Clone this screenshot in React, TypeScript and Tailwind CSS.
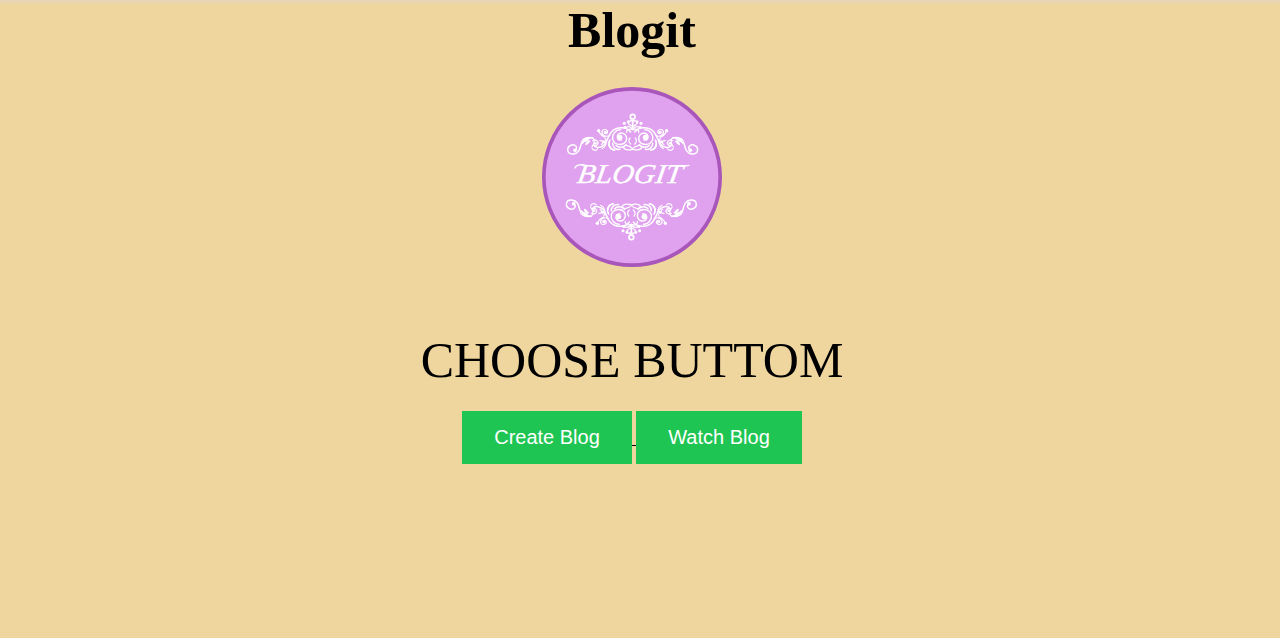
function HalfOrnament() {
  return (
    <g fill="none" stroke="#fff" strokeWidth="4.4" strokeLinecap="round">
      <path d="M117 210C128 204 118 192 107 195C90 200 91 223 112 222C130 220 132 204 136 190C140 176 152 170 170 174" />
      <path d="M139 190C145 182 153 180 160 184" strokeWidth="3.6" />
      <path d="M168 172C178 178 176 192 168 200M170 182C180 176 190 186 184 194C180 200 172 198 172 192" strokeWidth="3.6" />
      <path d="M284 156C272 139 242 139 227 155C212 171 214 198 190 202C182 203 176 200 174 196" />
      <path d="M256 180C243 183 239 166 251 160C267 155 276 172 270 184C261 198 236 197 230 178C227 164 238 150 254 149" strokeWidth="4" />
      <path d="M222 166C206 174 194 162 199 152C205 145 217 150 214 158C212 163 205 162 205 157" strokeWidth="3.6" />
      <path d="M188 152C192 162 198 169 208 171" strokeWidth="3.6" />
      <path d="M207 174C215 186 210 200 198 206M168 204C172 213 181 213 185 207M192 182C202 180 203 190 196 194" strokeWidth="3.6" />
      <path d="M222 180C214 194 222 209 236 211M230 190C230 202 240 210 252 208M240 196C248 205 262 203 270 194" />
      <path d="M289 208C278 212 262 209 263 201C266 193 280 196 289 205M284 192C278 187 277 180 282 174" strokeWidth="3.8" />
      <path d="M288 148C278 145 270 150 272 158M290 147C284 139 278 138 269 142M289 138C282 136 277 132 276 127" strokeWidth="3.8" />
      <g fill="#fff" stroke="none">
        <circle cx="117" cy="211" r="5.5" />
        <circle cx="252" cy="172" r="7.5" />
        <circle cx="188" cy="152" r="5" />
        <circle cx="178" cy="190" r="4" />
        <circle cx="208" cy="157" r="4.5" />
        <circle cx="204" cy="185" r="4.5" />
        <circle cx="265" cy="130" r="4.5" />
        <circle cx="267" cy="142" r="4" />
        <circle cx="277" cy="125" r="4.5" />
        <path d="M140 188C144 174 158 169 168 174C158 177 154 184 140 188Z" />
        <path d="M148 192C150 184 158 181 164 183C158 187 158 194 148 196Z" />
        <path d="M221 178C218 194 224 205 238 212C221 212 210 196 221 178Z" />
      </g>
    </g>
  );
}

function Ornament() {
  return (
    <g>
      <HalfOrnament />
      <g transform="translate(580 0) scale(-1 1)">
        <HalfOrnament />
      </g>
      <g fill="none" stroke="#fff" strokeWidth="5" strokeLinecap="round">
        <circle cx="290" cy="110" r="7" />
        <path d="M290 118V149M283 122H297" />
      </g>
    </g>
  );
}

function Logo() {
  return (
    <svg
      className="mt-[28px] block h-[180px] w-[180px]"
      viewBox="18 21 540 540"
      role="img"
      aria-label="Blogit"
    >
      <circle cx="288" cy="291" r="264.5" fill="#e0a2ee" stroke="#a956bb" strokeWidth="11" />
      <Ornament />
      <g transform="translate(-4 582) scale(1 -1)">
        <Ornament />
      </g>
      <text
        x="0"
        y="0"
        transform="translate(121 310) skewX(-9)"
        fill="#fff"
        stroke="#fff"
        strokeWidth="1"
        fontFamily="'Liberation Serif', serif"
        fontStyle="italic"
        fontSize="82"
        textLength="314"
        lengthAdjust="spacingAndGlyphs"
      >
        BLOGIT
      </text>
      <path
        d="M152 257C136 252 120 254 117 264M428 257C440 259 450 258 459 256"
        fill="none"
        stroke="#fff"
        strokeWidth="4"
        strokeLinecap="round"
      />
    </svg>
  );
}

const buttonClass =
  "h-[53px] cursor-pointer bg-[#1fc552] font-['Liberation_Sans',sans-serif] text-[20px] leading-[23px] text-white";

export default function App() {
  return (
    <div className="min-h-screen bg-[#eed69e] bg-[linear-gradient(to_bottom,#e8d6bb_0px,#ead5af_2px,#eed69e_5px)] font-['Liberation_Serif',serif] text-black">
      <main className="flex w-[1264px] flex-col items-center pt-0.5">
        <h1 className="text-[50px] leading-[57px] font-bold">Blogit</h1>
        <Logo />
        <p className="mt-[65px] text-[50px] leading-[57px]">CHOOSE BUTTOM</p>
        <div className="mt-[22px] flex">
          <button className={`w-[170px] ${buttonClass}`}>Create Blog</button>
          <span className="mt-[34px] h-px w-1 bg-black" />
          <button className={`w-[166px] ${buttonClass}`}>Watch Blog</button>
        </div>
      </main>
    </div>
  );
}
